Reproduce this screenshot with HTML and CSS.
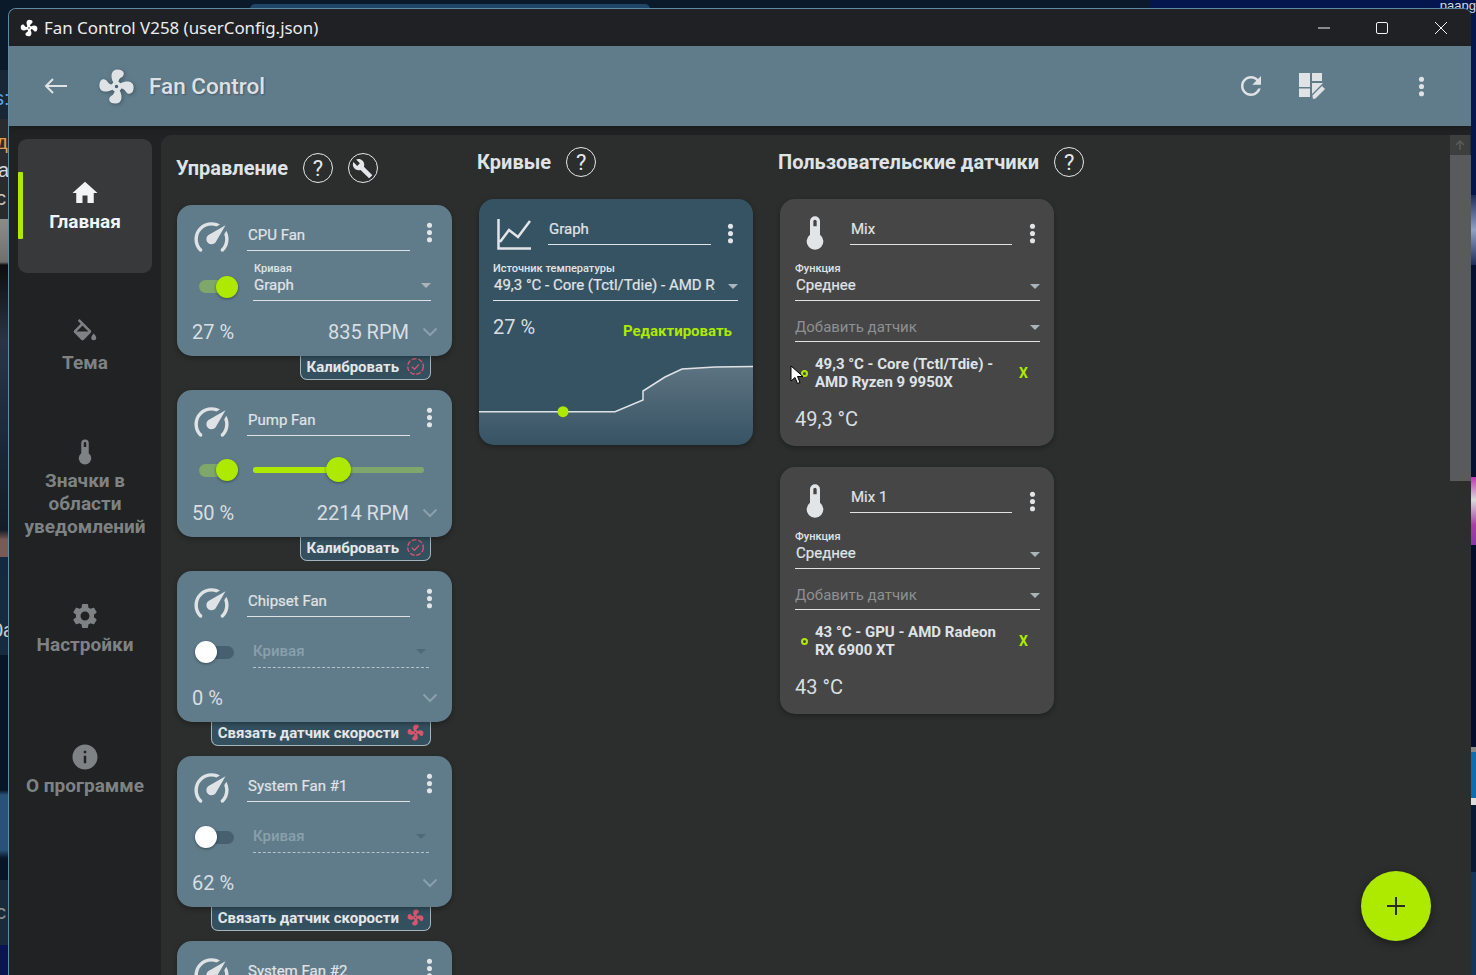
FILE: index.html
```html
<!DOCTYPE html>
<html lang="ru">
<head>
<meta charset="utf-8">
<title>Fan Control</title>
<link rel="stylesheet" href="styles.css">
</head>
<body>
<svg class="defs" aria-hidden="true">
  <symbol id="fan" viewBox="0 0 24 24"><path d="M12,11A1,1 0 0,0 11,12A1,1 0 0,0 12,13A1,1 0 0,0 13,12A1,1 0 0,0 12,11M12.5,2C17,2 17.11,5.57 14.75,6.75C13.76,7.24 13.32,8.29 13.13,9.22C13.61,9.42 14.03,9.73 14.35,10.13C18.05,8.13 22.03,8.92 22.03,12.5C22.03,17 18.46,17.1 17.28,14.73C16.78,13.74 15.72,13.3 14.79,13.11C14.59,13.59 14.28,14 13.88,14.34C15.87,18.03 15.08,22 11.5,22C7,22 6.91,18.42 9.27,17.24C10.25,16.75 10.69,15.71 10.89,14.79C10.4,14.59 9.97,14.27 9.65,13.87C5.96,15.85 2,15.07 2,11.5C2,7 5.56,6.89 6.74,9.26C7.24,10.25 8.29,10.68 9.22,10.87C9.41,10.39 9.73,9.97 10.14,9.65C8.15,5.96 8.94,2 12.5,2Z"/></symbol>
  <symbol id="speed" viewBox="0 0 24 24"><path d="M12,16A3,3 0 0,1 9,13C9,11.88 9.61,10.9 10.5,10.39L20.21,4.77L14.68,14.35C14.18,15.33 13.17,16 12,16M12,3C13.81,3 15.5,3.5 16.97,4.32L14.87,5.53C14,5.19 13,5 12,5A8,8 0 0,0 4,13C4,15.21 4.89,17.21 6.34,18.65H6.35C6.74,19.04 6.74,19.67 6.35,20.06C5.96,20.45 5.32,20.45 4.93,20.07V20.07C3.12,18.26 2,15.76 2,13A10,10 0 0,1 12,3M22,13C22,15.76 20.88,18.26 19.07,20.07V20.07C18.68,20.45 18.05,20.45 17.66,20.06C17.27,19.67 17.27,19.04 17.66,18.65V18.65C19.11,17.2 20,15.21 20,13C20,12 19.81,11 19.46,10.1L20.67,8C21.5,9.5 22,11.18 22,13Z"/></symbol>
  <symbol id="thermo" viewBox="0 0 24 24"><path d="M15 13V5A3 3 0 0 0 9 5V13A5 5 0 1 0 15 13M12 4A1 1 0 0 1 13 5V8H11V5A1 1 0 0 1 12 4Z"/></symbol>
  <symbol id="kebab" viewBox="0 0 24 24"><circle cx="12" cy="6" r="2.1"/><circle cx="12" cy="12" r="2.1"/><circle cx="12" cy="18" r="2.1"/></symbol>
  <symbol id="check" viewBox="0 0 18 18"><circle cx="9" cy="9" r="7.4" fill="none" stroke="currentColor" stroke-width="1.3" stroke-dasharray="4.6 1.6"/><path d="M5.6 9.2l2.4 2.4 4.4-4.6" fill="none" stroke="currentColor" stroke-width="1.2"/></symbol>
</svg>

<div class="desktop">
  <div class="wall-top"></div>
  <div class="wall-top-blue"></div>
  <div class="wall-left"></div>
  <div class="wall-right"></div>
  <span class="wall-text wt1">s:</span>
  <span class="wall-text wt2">д</span>
  <span class="wall-text wt3">а</span>
  <span class="wall-text wt4">с</span>
  <span class="wall-text wt5">0а</span>
  <span class="wall-text wt6">с</span>
  <span class="wall-text wt7">paapg</span>
</div>

<div class="window">
  <header class="titlebar">
    <svg class="title-icon"><use href="#fan"/></svg>
    <span class="title-text">Fan Control V258 (userConfig.json)</span>
    <div class="win-buttons">
      <span class="win-btn"><svg width="12" height="12" viewBox="0 0 12 12"><path d="M0 6h12" class="win-line"/></svg></span>
      <span class="win-btn"><svg width="12" height="12" viewBox="0 0 12 12"><rect x=".5" y=".5" width="11" height="11" rx="1.5" class="win-line"/></svg></span>
      <span class="win-btn"><svg width="12" height="12" viewBox="0 0 12 12"><path d="M0 0l12 12M12 0L0 12" class="win-line"/></svg></span>
    </div>
  </header>

  <div class="appbar">
    <svg class="back" viewBox="0 0 24 16"><path d="M23 8H2M9 1L2 8l7 7"/></svg>
    <svg class="app-logo"><use href="#fan"/></svg>
    <span class="app-name">Fan Control</span>
    <span class="app-spacer"></span>
    <svg class="app-refresh" viewBox="0 0 24 24"><path d="M17.65 6.35C16.2 4.9 14.21 4 12 4c-4.42 0-7.99 3.58-7.99 8s3.57 8 7.99 8c3.73 0 6.84-2.55 7.73-6h-2.08c-.82 2.33-3.04 4-5.65 4-3.31 0-6-2.69-6-6s2.69-6 6-6c1.66 0 3.14.69 4.22 1.78L13 11h7V4l-2.35 2.35z"/></svg>
    <svg class="app-dash" viewBox="0 0 26 26"><path d="M0 0h11v14H0zM0 15.5h11V24H0zM13 0h10v8H13zM13 10h11l-11 11z"/><path d="M14 26l-.6-3.5L23 13l3 3-9.5 9.500z"/></svg>
    <svg class="app-kebab"><use href="#kebab"/></svg>
  </div>

  <div class="body">
    <nav class="nav">
      <div class="nav-item active">
        <span class="nav-mark"></span>
        <svg class="nav-icon" viewBox="0 0 24 24"><path d="M10 20v-6h4v6h5v-8h3L12 3 2 12h3v8z"/></svg>
        <span class="nav-label">Главная</span>
      </div>
      <div class="nav-item">
        <svg class="nav-icon" viewBox="0 0 24 24"><path d="M19,11.5C19,11.5 17,13.67 17,15A2,2 0 0,0 19,17A2,2 0 0,0 21,15C21,13.67 19,11.5 19,11.5M5.21,10L10,5.21L14.79,10M16.56,8.94L7.62,0L6.21,1.41L8.59,3.79L3.44,8.94C2.85,9.5 2.85,10.47 3.44,11.06L8.94,16.56C9.23,16.85 9.62,17 10,17C10.38,17 10.77,16.85 11.06,16.56L16.56,11.06C17.15,10.47 17.15,9.5 16.56,8.94Z"/></svg>
        <span class="nav-label">Тема</span>
      </div>
      <div class="nav-item">
        <svg class="nav-icon"><use href="#thermo"/></svg>
        <span class="nav-label">Значки в области уведомлений</span>
      </div>
      <div class="nav-item">
        <svg class="nav-icon" viewBox="0 0 24 24"><path d="M19.14 12.94c.04-.3.06-.61.06-.94 0-.32-.02-.64-.07-.94l2.03-1.58c.18-.14.23-.41.12-.61l-1.92-3.32c-.12-.22-.37-.29-.59-.22l-2.39.96c-.5-.38-1.03-.7-1.62-.94l-.36-2.54c-.04-.24-.24-.41-.48-.41h-3.84c-.24 0-.43.17-.47.41l-.36 2.54c-.59.24-1.13.57-1.62.94l-2.39-.96c-.22-.08-.47 0-.59.22L2.74 8.87c-.12.21-.08.47.12.61l2.03 1.58c-.05.3-.09.63-.09.94s.02.64.07.94l-2.03 1.58c-.18.14-.23.41-.12.61l1.92 3.32c.12.22.37.29.59.22l2.39-.96c.5.38 1.03.7 1.62.94l.36 2.54c.05.24.24.41.48.41h3.84c.24 0 .44-.17.47-.41l.36-2.54c.59-.24 1.13-.56 1.62-.94l2.39.96c.22.08.47 0 .59-.22l1.92-3.32c.12-.22.07-.47-.12-.61l-2.01-1.58zM12 15.6c-1.98 0-3.6-1.62-3.6-3.6s1.62-3.6 3.6-3.6 3.6 1.62 3.6 3.6-1.62 3.6-3.6 3.6z"/></svg>
        <span class="nav-label">Настройки</span>
      </div>
      <div class="nav-item">
        <svg class="nav-icon" viewBox="0 0 24 24"><path d="M12 2C6.48 2 2 6.48 2 12s4.48 10 10 10 10-4.48 10-10S17.52 2 12 2zm1 15h-2v-6h2v6zm0-8h-2V7h2v2z"/></svg>
        <span class="nav-label">О программе</span>
      </div>
    </nav>

    <main class="main">
      <div class="columns">
        <section class="col col-control">
          <div class="col-head">
            <h2 class="heading">Управление</h2>
            <span class="round-btn">?</span>
            <span class="round-btn"><svg class="wrench" viewBox="0 0 24 24"><path d="M22.7,19L13.6,9.9C14.5,7.6 14,4.9 12.1,3C10.1,1 7.1,0.6 4.7,1.7L9,6L6,9L1.6,4.7C0.4,7.1 0.9,10.1 2.9,12.1C4.8,14 7.5,14.5 9.8,13.6L18.9,22.7C19.3,23.1 19.9,23.1 20.3,22.7L22.6,20.4C23.1,20 23.1,19.3 22.7,19Z"/></svg></span>
          </div>

          <article class="fan-card">
            <div class="card-head">
              <svg class="speed-icon"><use href="#speed"/></svg>
              <span class="name-field">CPU Fan</span>
              <svg class="kebab"><use href="#kebab"/></svg>
            </div>
            <div class="card-mid">
              <span class="toggle on"><i class="knob"></i></span>
              <div class="select fan-select">
                <span class="select-label">Кривая</span>
                <span class="select-value">Graph</span>
                <i class="arrow"></i>
              </div>
            </div>
            <div class="card-foot">
              <span class="pct">27 %</span>
              <span class="rpm">835 RPM</span>
              <svg class="chev" viewBox="0 0 16 10"><path d="M1.500 1.500L8 8l6.500-6.500"/></svg>
            </div>
          </article>
          <div class="tab"><span>Калибровать</span><svg class="tab-icon"><use href="#check"/></svg></div>

          <article class="fan-card">
            <div class="card-head">
              <svg class="speed-icon"><use href="#speed"/></svg>
              <span class="name-field">Pump Fan</span>
              <svg class="kebab"><use href="#kebab"/></svg>
            </div>
            <div class="card-mid slim">
              <span class="toggle on"><i class="knob"></i></span>
              <div class="slider"><i class="slider-fill"></i><i class="slider-knob"></i></div>
            </div>
            <div class="card-foot">
              <span class="pct">50 %</span>
              <span class="rpm">2214 RPM</span>
              <svg class="chev" viewBox="0 0 16 10"><path d="M1.500 1.500L8 8l6.500-6.500"/></svg>
            </div>
          </article>
          <div class="tab"><span>Калибровать</span><svg class="tab-icon"><use href="#check"/></svg></div>

          <article class="fan-card">
            <div class="card-head">
              <svg class="speed-icon"><use href="#speed"/></svg>
              <span class="name-field">Chipset Fan</span>
              <svg class="kebab"><use href="#kebab"/></svg>
            </div>
            <div class="card-mid">
              <span class="toggle"><i class="knob"></i></span>
              <div class="select fan-select disabled">
                <span class="select-value">Кривая</span>
                <i class="arrow"></i>
              </div>
            </div>
            <div class="card-foot">
              <span class="pct">0 %</span>
              <span class="rpm"></span>
              <svg class="chev" viewBox="0 0 16 10"><path d="M1.500 1.500L8 8l6.500-6.500"/></svg>
            </div>
          </article>
          <div class="tab"><span>Связать датчик скорости</span><svg class="tab-icon fan-red"><use href="#fan"/></svg></div>

          <article class="fan-card">
            <div class="card-head">
              <svg class="speed-icon"><use href="#speed"/></svg>
              <span class="name-field">System Fan #1</span>
              <svg class="kebab"><use href="#kebab"/></svg>
            </div>
            <div class="card-mid">
              <span class="toggle"><i class="knob"></i></span>
              <div class="select fan-select disabled">
                <span class="select-value">Кривая</span>
                <i class="arrow"></i>
              </div>
            </div>
            <div class="card-foot">
              <span class="pct">62 %</span>
              <span class="rpm"></span>
              <svg class="chev" viewBox="0 0 16 10"><path d="M1.500 1.500L8 8l6.500-6.500"/></svg>
            </div>
          </article>
          <div class="tab"><span>Связать датчик скорости</span><svg class="tab-icon fan-red"><use href="#fan"/></svg></div>

          <article class="fan-card">
            <div class="card-head">
              <svg class="speed-icon"><use href="#speed"/></svg>
              <span class="name-field">System Fan #2</span>
              <svg class="kebab"><use href="#kebab"/></svg>
            </div>
          </article>
        </section>

        <section class="col col-curves">
          <div class="col-head">
            <h2 class="heading">Кривые</h2>
            <span class="round-btn">?</span>
          </div>
          <article class="curve-card">
            <div class="wide-head">
              <svg class="chart-icon" viewBox="0 0 34 32"><path d="M1.500 1v29.500H34M3 24l9-12 9 7L33 3"/></svg>
              <span class="name-field">Graph</span>
              <svg class="kebab"><use href="#kebab"/></svg>
            </div>
            <div class="select wide-select">
              <span class="select-label">Источник температуры</span>
              <span class="select-value clip">49,3 °C - Core (Tctl/Tdie) - AMD Ryzen 9 9950X</span>
              <i class="arrow"></i>
            </div>
            <div class="curve-row">
              <span class="pct">27 %</span>
              <span class="edit">Редактировать</span>
            </div>
            <svg class="curve-plot" viewBox="0 0 274 100" preserveAspectRatio="none">
              <defs><linearGradient id="curveFill" x1="0" y1="0" x2="0" y2="1"><stop offset="0" stop-color="#5d7381"/><stop offset="1" stop-color="#5d7381" stop-opacity="0"/></linearGradient></defs>
              <path d="M0 66.700H136L164 55V46L186 32L203 24L236 22L274 21.500V100H0Z" fill="url(#curveFill)"/>
              <path d="M0 66.700H136L164 55V46L186 32L203 24L236 22L274 21.500" class="curve-line"/>
              <circle cx="84" cy="66.700" r="5.500" class="curve-dot"/>
            </svg>
          </article>
        </section>

        <section class="col col-sensors">
          <div class="col-head">
            <h2 class="heading">Пользовательские датчики</h2>
            <span class="round-btn">?</span>
          </div>
          <article class="sensor-card">
            <div class="wide-head">
              <svg class="thermo-icon"><use href="#thermo"/></svg>
              <span class="name-field">Mix</span>
              <svg class="kebab"><use href="#kebab"/></svg>
            </div>
            <div class="select wide-select">
              <span class="select-label">Функция</span>
              <span class="select-value">Среднее</span>
              <i class="arrow"></i>
            </div>
            <div class="select add-select">
              <span class="select-value">Добавить датчик</span>
              <i class="arrow"></i>
            </div>
            <div class="sensor-row">
              <i class="ring"></i>
              <span class="sensor-text">49,3 °C - Core (Tctl/Tdie) - AMD Ryzen 9 9950X</span>
              <span class="remove">X</span>
            </div>
            <span class="pct sensor-temp">49,3 °C</span>
          </article>
          <article class="sensor-card">
            <div class="wide-head">
              <svg class="thermo-icon"><use href="#thermo"/></svg>
              <span class="name-field">Mix 1</span>
              <svg class="kebab"><use href="#kebab"/></svg>
            </div>
            <div class="select wide-select">
              <span class="select-label">Функция</span>
              <span class="select-value">Среднее</span>
              <i class="arrow"></i>
            </div>
            <div class="select add-select">
              <span class="select-value">Добавить датчик</span>
              <i class="arrow"></i>
            </div>
            <div class="sensor-row">
              <i class="ring"></i>
              <span class="sensor-text">43 °C - GPU - AMD Radeon RX 6900 XT</span>
              <span class="remove">X</span>
            </div>
            <span class="pct sensor-temp">43 °C</span>
          </article>
        </section>
      </div>

      <div class="scrollbar">
        <span class="sb-btn"><svg viewBox="0 0 12 12"><path d="M6 11V2M2 6l4-4 4 4"/></svg></span>
        <span class="sb-thumb"></span>
        <span class="sb-fill"></span>
        <span class="sb-btn"><svg viewBox="0 0 12 12"><path d="M6 1v9M2 6l4 4 4-4"/></svg></span>
      </div>

      <button class="fab" type="button"><svg viewBox="0 0 18 18"><path d="M9 0v18M0 9h18"/></svg></button>
    </main>
  </div>
</div>

<svg class="cursor" viewBox="0 0 14 20"><path d="M1 1v15l4-3.500 2.500 6 2.500-1-2.500-6H13z"/></svg>
</body>
</html>
```

FILE: styles.css
```css
* { box-sizing: border-box; }

html, body {
  margin: 0;
  height: 100%;
  overflow: hidden;
  background: #0a1626;
  font-family: Roboto, "Liberation Sans", sans-serif;
  color: #dfe3e6;
}

.defs { position: absolute; width: 0; height: 0; }

/* ---- desktop behind the window ---- */
.desktop { position: absolute; inset: 0; overflow: hidden; }
.wall-top { position: absolute; left: 0; right: 0; top: 0; height: 9px; background: linear-gradient(90deg, #0b1a2b 0, #0b1a2b 1150px, #05154d 1150px, #05154d 100%); }
.wall-top-blue { position: absolute; left: 250px; top: 4px; width: 400px; height: 5px; border-radius: 5px 5px 0 0; background: #1f4569; }
.wall-left {
  position: absolute; left: 0; top: 0; width: 9px; bottom: 0;
  background: linear-gradient(180deg,
    #0b1a2b 0, #0b1a2b 70px, #182636 70px, #182636 119px,
    #2a2b2f 119px, #2a2b2f 219px, #8d8d88 219px, #6f6f6c 262px,
    #0e0e10 265px, #2a3444 340px, #1d2a3a 430px, #141c28 530px,
    #7a5a55 540px, #7a5a55 557px, #14293f 557px, #172b40 655px,
    #081526 655px, #081526 790px, #2a5279 795px, #2a5279 850px,
    #081526 858px, #081526 880px, #1a2b3a 880px, #1a2b3a 945px,
    #0a1450 945px, #0a1450 100%);
}
.wall-right {
  position: absolute; right: 0; top: 0; width: 5px; bottom: 0;
  background: linear-gradient(180deg,
    #05154d 0, #05154d 195px, #1e2c5c 195px, #90a0c8 230px, #1e2c5c 265px,
    #061030 265px, #061030 477px, #c233b5 477px, #d9d9d9 500px, #a93ea8 525px, #8a36a8 545px,
    #050d2c 545px, #050d2c 747px, #888 747px, #888 752px, #0e6cb0 752px, #0e6cb0 798px, #ddd 798px, #ddd 805px,
    #0a1a35 805px, #0a1a35 872px, #16355e 872px, #16355e 100%);
}
.wall-text { position: absolute; font-size: 20px; line-height: 24px; color: #d5d8dc; font-family: "Liberation Sans", sans-serif; }
.wt1 { left: -6px; top: 86px; color: #5aa9e6; }
.wt2 { left: -4px; top: 130px; color: #e89b4b; }
.wt3 { left: -2px; top: 158px; }
.wt4 { left: -4px; top: 186px; color: #cfc4bb; }
.wt5 { left: -8px; top: 618px; color: #c7cdd3; }
.wt6 { left: -4px; top: 900px; color: #8d9298; }
.wt7 { right: 0; top: -6px; font-size: 13px; }

/* ---- window ---- */
.window {
  position: absolute;
  left: 8px; top: 8px; right: 5px; bottom: -20px;
  display: flex;
  flex-direction: column;
  background: #202223;
  border: 1px solid #5f8aa3;
  border-bottom: 0;
  border-right: 0;
  border-radius: 8px 8px 0 0;
  overflow: hidden;
}

.titlebar { flex: none; height: 37px; display: flex; align-items: center; background: #202124; padding-left: 10px; }
.title-icon { width: 20px; height: 20px; fill: #fff; }
.title-text { margin-left: 5px; font-family: "Noto Sans", sans-serif; font-size: 16.900px; color: #eceded; white-space: nowrap; }
.win-buttons { margin-left: auto; margin-right: 1px; display: flex; }
.win-btn { width: 58.500px; display: flex; justify-content: center; align-items: center; height: 37px; }
.win-line { fill: none; stroke: #f2f2f2; stroke-width: 1; }

.appbar { flex: none; height: 80px; display: flex; align-items: center; background: #607c8b; box-shadow: 0 2px 5px rgba(0,0,0,.25); position: relative; z-index: 1; }
.back { width: 24px; height: 16px; margin-left: 35px; fill: none; stroke: #dfe3e6; stroke-width: 2; }
.app-logo { width: 41px; height: 41px; margin-left: 28px; fill: #dfe3e6; filter: drop-shadow(1px 1px 2px rgba(0,0,0,.3)); }
.app-name { margin-left: 12px; font-size: 22.500px; font-weight: 500; color: #dde1e4; text-shadow: 1px 1px 2px rgba(0,0,0,.3); white-space: nowrap; }
.app-spacer { flex: 1; }
.app-refresh { width: 30px; height: 30px; fill: #dfe3e6; }
.app-dash { width: 26px; height: 26px; margin-left: 33px; fill: #dfe3e6; }
.app-kebab { width: 29px; height: 29px; margin-left: 82px; margin-right: 35px; fill: #dfe3e6; }

.body { flex: 1; min-height: 0; display: flex; background: #202223; }

/* ---- nav rail ---- */
.nav { flex: none; width: 152px; padding: 13px 0 0 9px; display: flex; flex-direction: column; gap: 7px; }
.nav-item { position: relative; width: 134px; height: 134px; flex: none; display: flex; flex-direction: column; align-items: center; justify-content: center; color: #7f8284; text-align: center; border-radius: 9px; }
.nav-item.active { background: #37393b; color: #f2f4f5; }
.nav-mark { position: absolute; left: 0; top: 33px; width: 5px; height: 67px; background: #aeea00; border-radius: 1px; }
.nav-icon { width: 30px; height: 30px; flex: none; fill: currentColor; margin-top: -2px; }
.nav-label { margin-top: 2px; font-size: 19px; line-height: 23px; font-weight: 700; padding: 0 4px; }

/* ---- main ---- */
.main { flex: 1; min-width: 0; margin-top: 9px; position: relative; display: flex; background: #2c2e2e; border-top-left-radius: 11px; overflow: hidden; }
.columns { flex: 1; min-width: 0; display: flex; gap: 27px; padding-left: 16px; overflow: hidden; }
.col { flex: none; width: 274px; display: flex; flex-direction: column; align-items: stretch; padding-top: 12px; }
.col-control { width: 275px; padding-top: 18px; }
.col-head { height: 30px; margin: 0 0 22px -2px; display: flex; align-items: center; gap: 15px; white-space: nowrap; }
.col-control .col-head { margin-left: -1px; gap: 15px; }
.heading { margin: 0; font-size: 20px; font-weight: 700; color: #dfe3e6; }
.round-btn { flex: none; width: 30px; height: 30px; border: 1.500px solid #e4e7e9; border-radius: 50%; display: flex; align-items: center; justify-content: center; font-size: 22px; color: #e4e7e9; }
.wrench { width: 21px; height: 21px; fill: #e4e7e9; }

/* ---- shared fields ---- */
.kebab { width: 29px; height: 29px; flex: none; fill: #e2e5e7; }
.name-field { display: block; border-bottom: 1.500px solid #dfe3e6; font-size: 15px; line-height: 20px; padding: 0 0 5px 1px; color: #e0e4e6; white-space: nowrap; -webkit-text-stroke: .2px currentColor; }
.select { position: relative; border-bottom: 1.500px solid #dfe3e6; }
.select-label { display: block; font-size: 11px; line-height: 13px; font-weight: 500; color: #e0e4e6; white-space: nowrap; }
.select-value { display: block; font-size: 15px; line-height: 20px; padding-left: 1px; color: #e0e4e6; white-space: nowrap; -webkit-text-stroke: .2px currentColor; }
.select-value.clip { width: 222px; overflow: hidden; }
.arrow { position: absolute; right: 0; bottom: 12px; width: 0; height: 0; border: 5.500px solid transparent; border-bottom: 0; border-top: 5px solid #a9b4bb; }
.pct { font-size: 20px; line-height: 22px; color: #d9dee1; }

/* ---- fan card ---- */
.fan-card { position: relative; z-index: 1; flex: none; background: #607c8b; border-radius: 15px; padding: 14px 0 15px 0; box-shadow: 0 2px 5px rgba(0,0,0,.3); }
.card-head { height: 32px; display: flex; align-items: flex-end; position: relative; padding-left: 70px; }
.speed-icon { position: absolute; left: 14px; top: -2px; width: 41px; height: 41px; fill: #dfe3e6; }
.card-head .name-field { width: 163px; }
.card-head .kebab { position: absolute; left: 238px; top: -1px; }
.card-mid { height: 70px; display: flex; align-items: center; padding-left: 18px; }
.card-mid.slim { height: 66px; padding-top: 1px; }
.card-foot { height: 20px; display: flex; align-items: center; padding-left: 15px; padding-top: 1px; }
.rpm { margin-left: auto; font-size: 20px; color: #d9dee1; white-space: nowrap; }
.chev { flex: none; width: 16px; height: 10px; margin: 0 14px 0 13px; fill: none; stroke: #8aa0ac; stroke-width: 2; }

.toggle { position: relative; flex: none; width: 35px; height: 13px; border-radius: 7px; background: #7fa66b; margin-right: 19px; margin-left: 4px; }
.toggle.on { margin-top: 1px; }
.knob { position: absolute; top: 50%; width: 22px; height: 22px; margin-top: -11px; border-radius: 50%; box-shadow: 0 1px 3px rgba(0,0,0,.4); }
.toggle.on .knob { left: 17px; background: #aeea00; }
.toggle:not(.on) { background: #46606f; margin-left: 11px; width: 28px; margin-right: 19px; }
.toggle:not(.on) .knob { left: -11px; background: #fff; }

.fan-select { width: 178px; height: 39px; margin-top: -9px; }
.fan-select .select-label { margin: 0 0 0 1px; }
.fan-select .arrow { bottom: 12px; }
.fan-select.disabled { height: 32px; margin-top: 0; padding-top: 6px; border-bottom: 0; width: 176px; }
.fan-select.disabled::after { content: ""; position: absolute; left: 0; right: 0; bottom: 0; border-bottom: 1.500px dashed #b7c3ca; }
.fan-select.disabled .select-value { color: #8aa0ab; padding-left: 0; font-weight: 500; line-height: 18px; -webkit-text-stroke: 0; }
.fan-select.disabled .arrow { border-top-color: #4f6978; bottom: 14px; right: 3px; }

.slider { position: relative; width: 171px; height: 6px; border-radius: 3px; background: #7fa66b; margin-left: 0; }
.slider-fill { position: absolute; left: 0; top: 0; height: 6px; width: 86px; border-radius: 3px; background: #aeea00; }
.slider-knob { position: absolute; left: 73px; top: -9.500px; width: 25px; height: 25px; border-radius: 50%; background: #aeea00; box-shadow: 0 1px 3px rgba(0,0,0,.4); }

.tab { flex: none; align-self: flex-end; margin: 0 21px 10px 0; height: 24px; padding: 0 5px 2px 6px; display: flex; align-items: center; gap: 7px; background: #34505f; border: 1px solid #a4b3bc; border-top: 0; border-radius: 0 0 7px 7px; font-size: 15px; font-weight: 700; color: #e4e7e9; white-space: nowrap; }
.tab-icon { width: 19px; height: 19px; flex: none; color: #d3586e; fill: #d3586e; }

/* ---- curve / sensor cards ---- */
.curve-card, .sensor-card { position: relative; flex: none; border-radius: 15px; padding: 0 14px 0 14px; box-shadow: 0 2px 5px rgba(0,0,0,.3); overflow: hidden; }
.curve-card { height: 246px; background: #365364; }
.sensor-card { height: 247px; background: #464646; margin: 0 0 21px 0; padding-left: 15px; }
.wide-head { height: 46px; margin-top: 0; display: flex; align-items: flex-end; position: relative; padding-left: 55px; }
.wide-head .name-field { width: 163px; }
.sensor-card .wide-head .name-field { width: 162px; }
.wide-head .kebab { position: absolute; left: 223px; top: 20px; }
.sensor-card .wide-head .kebab { left: 223px; }
.chart-icon { position: absolute; left: 4px; top: 19px; width: 34px; height: 32px; fill: none; stroke: #e2e5e7; stroke-width: 2.500px; }
.thermo-icon { position: absolute; left: 0; top: 14px; width: 40px; height: 40px; fill: #e2e5e7; }
.wide-select { margin-top: 17px; width: 245px; height: 39px; }
.add-select { width: 245px; height: 32px; margin-top: 9px; padding-top: 7px; }
.add-select .select-value { color: #8e9092; padding-left: 0; -webkit-text-stroke: 0; }
.add-select .arrow { bottom: 11px; }
.wide-select .arrow { bottom: 11px; }
.curve-row { margin-top: 12px; display: flex; align-items: center; justify-content: space-between; padding-right: 7px; }
.edit { font-size: 15px; font-weight: 700; color: #aeea00; margin-top: 9px; }
.curve-plot { position: absolute; left: 0; bottom: 0; width: 100%; height: 100px; fill: none; }
.curve-line { fill: none; stroke: #dfe3e6; stroke-width: 1.500; }
.curve-dot { fill: #aeea00; }

.sensor-row { position: relative; display: flex; align-items: center; margin-top: 13px; padding-left: 20px; }
.ring { position: absolute; left: 6px; top: 15px; width: 7px; height: 7px; border: 2px solid #aeea00; border-radius: 50%; }
.sensor-text { width: 190px; font-size: 15px; line-height: 18px; font-weight: 700; color: #dfe3e6; }
.remove { position: absolute; left: 224px; top: 10px; font-size: 14px; font-weight: 700; color: #aeea00; }
.sensor-temp { display: block; margin-top: 17px; }

/* ---- scrollbar + fab ---- */
.scrollbar { position: absolute; right: 0; top: 0; bottom: 0; width: 21px; display: flex; flex-direction: column; background: #2c2e2e; }
.sb-btn { flex: none; height: 20px; width: 20px; background: #3d3f3f; display: flex; align-items: center; justify-content: center; }
.sb-btn svg { width: 12px; height: 12px; fill: none; stroke: #5a5c5c; stroke-width: 1.500; }
.sb-thumb { flex: none; height: 326px; background: #595a5b; }
.sb-fill { flex: 1; }

.fab { position: absolute; left: 1200px; top: 736px; width: 70px; height: 70px; border: 0; border-radius: 50%; background: #aeea00; display: flex; align-items: center; justify-content: center; box-shadow: 0 3px 8px rgba(0,0,0,.4); padding: 0; }
.fab svg { width: 18px; height: 18px; fill: none; stroke: #2a2c20; stroke-width: 2; }

.cursor { position: absolute; left: 790px; top: 365px; width: 14px; height: 20px; fill: #fff; stroke: #000; stroke-width: 1; }
```
